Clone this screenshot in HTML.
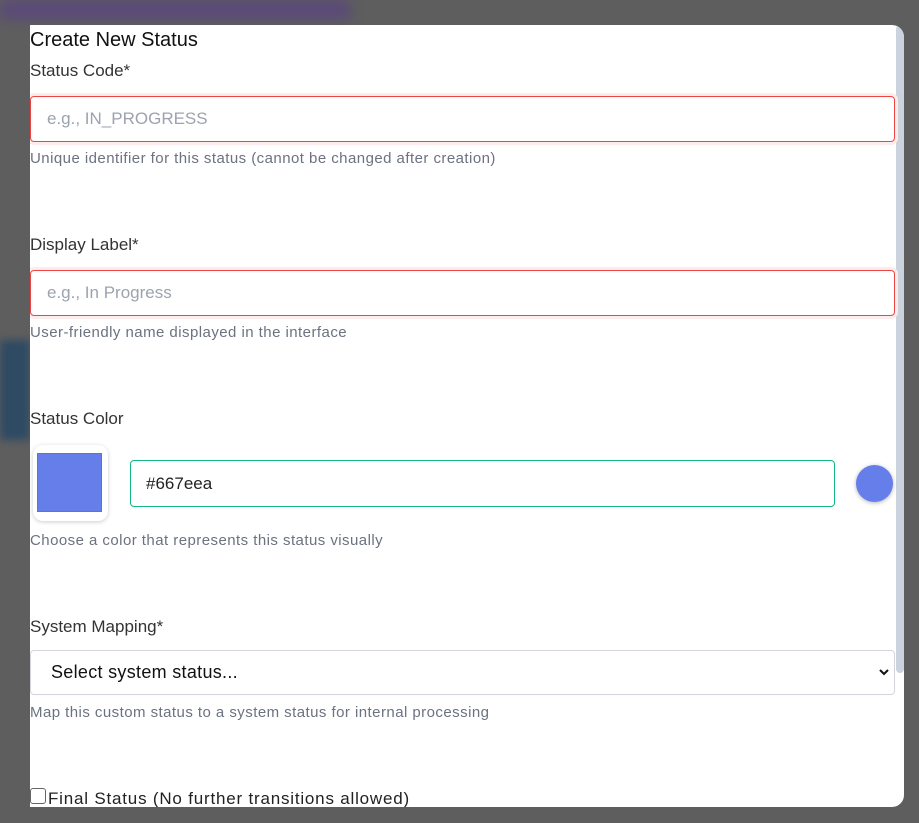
<!DOCTYPE html>
<html><head><style>
*{box-sizing:border-box;margin:0;padding:0}
body{width:919px;height:823px;background:#5e5e5e;font-family:"Liberation Sans",sans-serif;position:relative;overflow:hidden}
.blur1{position:absolute;left:0;top:0;width:350px;height:20px;background:#5a4a78;filter:blur(6px)}
.blur2{position:absolute;left:0;top:340px;width:30px;height:100px;background:#2f4a63;filter:blur(4px)}
.modal{position:absolute;left:30px;top:25px;width:874px;height:782px;background:#fff;border-radius:0 12px 12px 0;overflow:hidden}
.sb{position:absolute;left:866px;top:0;width:8px;height:648px;background:#cbd3de;border-radius:4px}
.a{position:absolute;left:0;white-space:nowrap}
h2{font-weight:400;font-size:20px;color:#111}
.lbl{font-size:17px;color:#333}
.help{font-size:15px;color:#6b7280;letter-spacing:.45px}
.inp{position:absolute;left:0;width:865px;height:46px;border:1px solid #ef4444;border-radius:4px;box-shadow:0 0 0 3px #fdecec;font-size:17px;color:#9ca3af;padding:12px 16px}
</style></head><body>
<div class="blur1"></div><div class="blur2"></div>
<div class="modal">
<div class="sb"></div>
<h2 class="a" style="top:4px">Create New Status</h2>
<div class="a lbl" style="top:36px">Status Code*</div>
<div class="inp" style="top:71px">e.g., IN_PROGRESS</div>
<div class="a help" style="top:125px">Unique identifier for this status (cannot be changed after creation)</div>
<div class="a lbl" style="top:210px">Display Label*</div>
<div class="inp" style="top:245px">e.g., In Progress</div>
<div class="a help" style="top:299px">User-friendly name displayed in the interface</div>
<div class="a lbl" style="top:384px">Status Color</div>
<div style="position:absolute;left:3px;top:420px;width:75px;height:76px;background:#fff;border-radius:10px;box-shadow:0 1px 4px rgba(0,0,0,.2)"></div>
<div style="position:absolute;left:7px;top:428px;width:65px;height:59px;background:#667eea;border:1px solid #777"></div>
<div style="position:absolute;left:100px;top:435px;width:705px;height:47px;border:1px solid #10b981;border-radius:4px;font-size:17px;color:#222;padding:13px 15px">#667eea</div>
<div style="position:absolute;left:826px;top:440px;width:37px;height:37px;border-radius:50%;background:#667eea;box-shadow:0 1px 4px rgba(0,0,0,.3)"></div>
<div class="a help" style="top:507px">Choose a color that represents this status visually</div>
<div class="a lbl" style="top:592px">System Mapping*</div>
<div style="position:absolute;left:0;top:625px;width:865px;height:45px;border:1px solid #d1d5db;border-radius:4px;font-size:18px;letter-spacing:.3px;color:#111;padding:11px 20px">Select system status...<svg style="position:absolute;right:5px;top:17px" width="10" height="8" viewBox="0 0 10 8"><path d="M1 2l4 4 4-4" fill="none" stroke="#111" stroke-width="2"/></svg></div>
<div class="a help" style="top:679px">Map this custom status to a system status for internal processing</div>
<div style="position:absolute;left:0;top:763px;width:16px;height:16px;border:1px solid #666;border-radius:3px"></div>
<div class="a lbl" style="top:764px;left:18px;color:#222;letter-spacing:.8px">Final Status (No further transitions allowed)</div>
</div>
</body></html>
